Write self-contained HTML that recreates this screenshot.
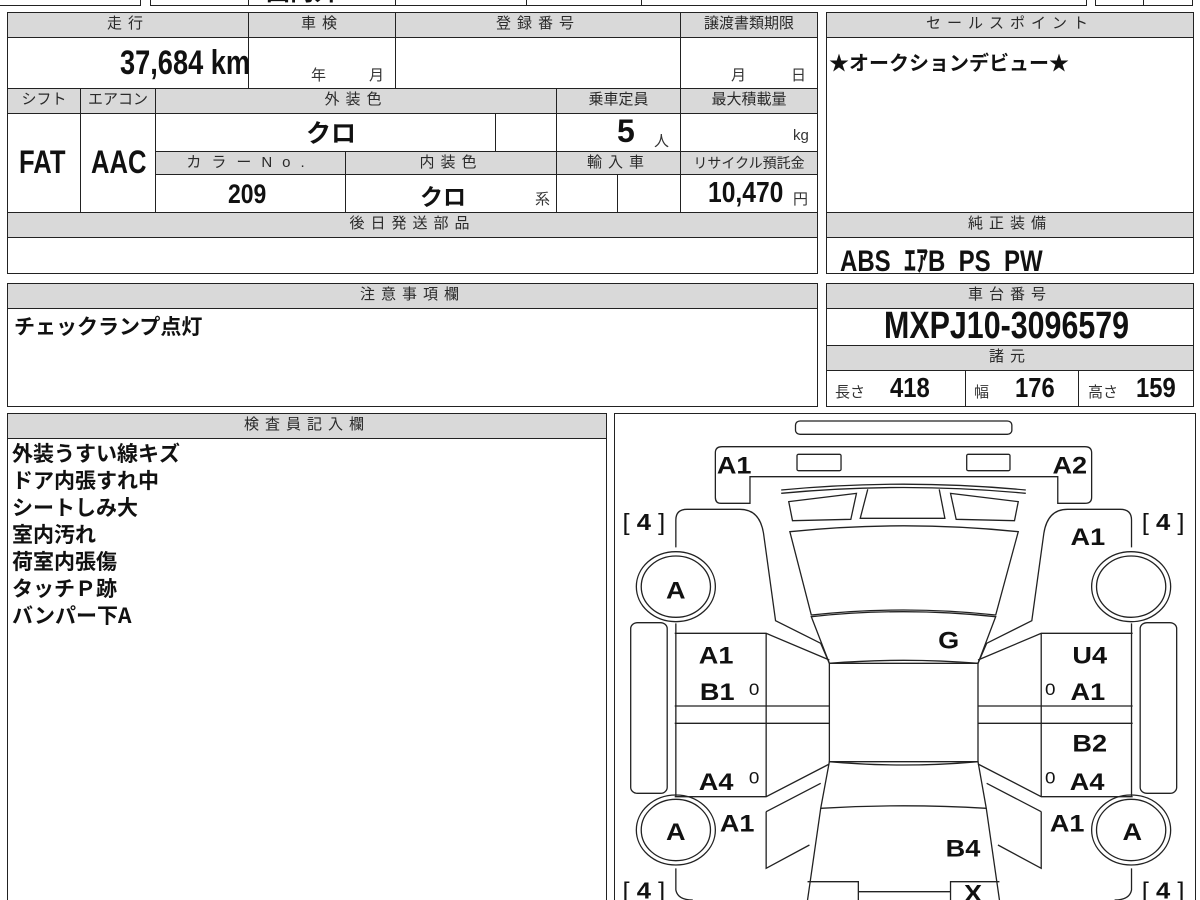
<!DOCTYPE html>
<html style="width:1200px;height:900px;overflow:hidden"><head><meta charset="utf-8">
<style>
*{margin:0;padding:0;box-sizing:border-box}
html,body{width:1200px;height:900px;overflow:hidden}
body{background:#fff;position:relative;font-family:"Liberation Sans","Noto Sans CJK JP",sans-serif;color:#111}
.c{position:absolute;border:1.5px solid #222}
.h{background:#d9d9d9;color:#2a2a2a;font-size:15px;letter-spacing:6px;text-align:center;line-height:22px}
.t{position:absolute;white-space:nowrap}
.n{font-family:"Liberation Sans Narrow","Liberation Sans","Noto Sans CJK JP",sans-serif;font-weight:bold;color:#111}
.j{font-family:"Noto Sans CJK JP",sans-serif;font-weight:bold;color:#111}
.s{font-size:15px;color:#333}
</style></head><body>
<div class="c" style="left:-2px;top:-20px;width:143px;height:26px"></div>
<div class="c" style="left:150px;top:-20px;width:99px;height:26px"></div>
<div class="c" style="left:248px;top:-20px;width:148px;height:26px"></div>
<div class="c" style="left:395px;top:-20px;width:132px;height:26px"></div>
<div class="c" style="left:526px;top:-20px;width:116px;height:26px"></div>
<div class="c" style="left:641px;top:-20px;width:446px;height:26px"></div>
<div class="c" style="left:1095px;top:-20px;width:49px;height:26px"></div>
<div class="c" style="left:1143px;top:-20px;width:50px;height:26px"></div>
<div class="t j" style="left:266px;top:-28px;font-size:24px">国内外</div>

<div class="c h" style="left:7px;top:12px;width:242px;height:26px">走行</div>
<div class="c h" style="left:248px;top:12px;width:148px;height:26px">車検</div>
<div class="c h" style="left:395px;top:12px;width:286px;height:26px">登録番号</div>
<div class="c h" style="left:680px;top:12px;width:138px;height:26px;letter-spacing:0">譲渡書類期限</div>
<div class="c" style="left:7px;top:37px;width:242px;height:52px"></div>
<div class="c" style="left:248px;top:37px;width:148px;height:52px"></div>
<div class="c" style="left:395px;top:37px;width:286px;height:52px"></div>
<div class="c" style="left:680px;top:37px;width:138px;height:52px"></div>
<div class="t n" style="left:120px;top:44px;font-size:34px;transform:scaleX(.8);transform-origin:left">37,684 km</div>
<div class="t s" style="left:311px;top:64px">年</div>
<div class="t s" style="left:369px;top:64px">月</div>
<div class="t s" style="left:731px;top:64px">月</div>
<div class="t s" style="left:791px;top:64px">日</div>

<div class="c h" style="left:7px;top:88px;width:74px;height:26px;letter-spacing:0">シフト</div>
<div class="c h" style="left:80px;top:88px;width:76px;height:26px;letter-spacing:0">エアコン</div>
<div class="c h" style="left:155px;top:88px;width:402px;height:26px">外装色</div>
<div class="c h" style="left:556px;top:88px;width:125px;height:26px;letter-spacing:0">乗車定員</div>
<div class="c h" style="left:680px;top:88px;width:138px;height:26px;letter-spacing:0">最大積載量</div>
<div class="c" style="left:7px;top:113px;width:74px;height:100px"></div>
<div class="c" style="left:80px;top:113px;width:76px;height:100px"></div>
<div class="c" style="left:155px;top:113px;width:341px;height:39px"></div>
<div class="c" style="left:495px;top:113px;width:62px;height:39px"></div>
<div class="c" style="left:556px;top:113px;width:125px;height:39px"></div>
<div class="c" style="left:680px;top:113px;width:138px;height:39px"></div>
<div class="t n" style="left:19px;top:144px;font-size:32px;transform:scaleX(.8);transform-origin:left">FAT</div>
<div class="t n" style="left:91px;top:144px;font-size:32px;transform:scaleX(.8);transform-origin:left">AAC</div>
<div class="t j" style="left:306px;top:114px;font-size:25px">クロ</div>
<div class="t n" style="left:617px;top:113px;font-size:32px">5</div>
<div class="t s" style="left:654px;top:130px">人</div>
<div class="t s" style="left:793px;top:127px">kg</div>

<div class="c h" style="left:155px;top:151px;width:191px;height:24px;letter-spacing:10px">カラーNo.</div>
<div class="c h" style="left:345px;top:151px;width:212px;height:24px">内装色</div>
<div class="c h" style="left:556px;top:151px;width:125px;height:24px">輸入車</div>
<div class="c h" style="left:680px;top:151px;width:138px;height:24px;letter-spacing:0;font-size:14px">リサイクル預託金</div>
<div class="c" style="left:155px;top:174px;width:191px;height:39px"></div>
<div class="c" style="left:345px;top:174px;width:212px;height:39px"></div>
<div class="c" style="left:556px;top:174px;width:62px;height:39px"></div>
<div class="c" style="left:617px;top:174px;width:64px;height:39px"></div>
<div class="c" style="left:680px;top:174px;width:138px;height:39px"></div>
<div class="t n" style="left:228px;top:179px;font-size:27px;transform:scaleX(.85);transform-origin:left">209</div>
<div class="t j" style="left:420px;top:178px;font-size:23px">クロ</div>
<div class="t s" style="left:535px;top:188px">系</div>
<div class="t n" style="left:708px;top:177px;font-size:29px;transform:scaleX(.85);transform-origin:left">10,470</div>
<div class="t s" style="left:793px;top:188px">円</div>
<div class="c h" style="left:7px;top:212px;width:811px;height:26px">後日発送部品</div>
<div class="c" style="left:7px;top:237px;width:811px;height:37px"></div>

<div class="c h" style="left:826px;top:12px;width:368px;height:26px">セールスポイント</div>
<div class="c" style="left:826px;top:37px;width:368px;height:176px"></div>
<div class="t j" style="left:829px;top:47px;font-size:20px">★オークションデビュー★</div>
<div class="c h" style="left:826px;top:212px;width:368px;height:26px">純正装備</div>
<div class="c" style="left:826px;top:237px;width:368px;height:37px"></div>
<div class="t n" style="left:840px;top:236px;font-size:30px;transform:scaleX(.8);transform-origin:left">ABS &nbsp;ｴｱB &nbsp;PS &nbsp;PW</div>

<div class="c h" style="left:7px;top:283px;width:811px;height:26px">注意事項欄</div>
<div class="c" style="left:7px;top:308px;width:811px;height:99px"></div>
<div class="t j" style="left:14px;top:311px;font-size:21px">チェックランプ点灯</div>

<div class="c h" style="left:826px;top:283px;width:368px;height:26px">車台番号</div>
<div class="c" style="left:826px;top:308px;width:368px;height:38px"></div>
<div class="t n" style="left:884px;top:305px;font-size:38px;transform:scaleX(.8);transform-origin:left">MXPJ10-3096579</div>
<div class="c h" style="left:826px;top:345px;width:368px;height:26px">諸元</div>
<div class="c" style="left:826px;top:370px;width:140px;height:37px"></div>
<div class="c" style="left:965px;top:370px;width:114px;height:37px"></div>
<div class="c" style="left:1078px;top:370px;width:116px;height:37px"></div>
<div class="t s" style="left:835px;top:381px">長さ</div>
<div class="t n" style="left:890px;top:372px;font-size:28px;transform:scaleX(.85);transform-origin:left">418</div>
<div class="t s" style="left:974px;top:381px">幅</div>
<div class="t n" style="left:1015px;top:372px;font-size:28px;transform:scaleX(.85);transform-origin:left">176</div>
<div class="t s" style="left:1088px;top:381px">高さ</div>
<div class="t n" style="left:1136px;top:372px;font-size:28px;transform:scaleX(.85);transform-origin:left">159</div>

<div class="c h" style="left:7px;top:413px;width:600px;height:26px">検査員記入欄</div>
<div class="c" style="left:7px;top:438px;width:600px;height:464px"></div>
<div class="t j" style="left:12px;top:440px;font-size:21px;line-height:27px">外装うすい線キズ<br>ドア内張すれ中<br>シートしみ大<br>室内汚れ<br>荷室内張傷<br>タッチＰ跡<br>バンパー下A</div>

<div class="c" style="left:614px;top:413px;width:582px;height:489px"></div>
<svg style="position:absolute;left:610px;top:410px" width="590" height="490" viewBox="0 0 1568 1470" preserveAspectRatio="none">
<g fill="none" stroke="#222" stroke-width="1.3">
<rect x="493" y="33" width="575" height="40" rx="12" vector-effect="non-scaling-stroke"/>
<path vector-effect="non-scaling-stroke" d="M372,280 L295,280 Q280,280 280,262 L280,128 Q280,110 298,110 L1262,110 Q1280,110 1280,128 L1280,262 Q1280,280 1262,280 L1190,280 L1190,200 L372,200 Z"/>
<rect vector-effect="non-scaling-stroke" x="497" y="133" width="117" height="49" rx="4"/>
<rect vector-effect="non-scaling-stroke" x="948" y="133" width="115" height="49" rx="4"/>
<path vector-effect="non-scaling-stroke" d="M455,240 Q780,205 1105,240 M455,250 Q780,215 1105,250"/>
<path vector-effect="non-scaling-stroke" d="M475,275 L655,250 L640,328 L485,332 Z M1085,275 L905,250 L920,328 L1075,332 Z"/>
<path vector-effect="non-scaling-stroke" d="M685,238 L665,325 L890,325 L875,238"/>
<path vector-effect="non-scaling-stroke" d="M478,365 Q780,330 1085,365 L1025,615 Q780,585 535,615 Z"/>
<path vector-effect="non-scaling-stroke" d="M535,620 Q780,590 1025,620 L978,760 Q780,742 583,760 Z"/>
<rect vector-effect="non-scaling-stroke" x="583" y="760" width="395" height="295"/>
<path vector-effect="non-scaling-stroke" d="M583,1055 Q780,1075 978,1055 L1000,1195 Q780,1180 560,1195 Z"/>
<path vector-effect="non-scaling-stroke" d="M560,1195 L525,1470 M1000,1195 L1035,1470 M525,1415 L660,1415 L660,1470 M1035,1415 L905,1415 L905,1470 M660,1445 L905,1445"/>
<path vector-effect="non-scaling-stroke" d="M175,412 L175,330 Q175,298 205,298 L345,298 Q398,298 408,370 L440,632 L560,700 L583,760"/>
<path vector-effect="non-scaling-stroke" d="M172,670 L415,670 L583,750 M415,670 L415,1160 M172,888 L583,888 M172,940 L583,940 M172,1160 L415,1160 L583,1062 M175,640 L175,1160"/>
<path vector-effect="non-scaling-stroke" d="M415,1205 L560,1120 M415,1205 L415,1375 L530,1305 M175,1375 L175,1440 Q180,1470 220,1470"/>
<rect vector-effect="non-scaling-stroke" x="55" y="638" width="97" height="512" rx="18"/>
<path vector-effect="non-scaling-stroke" d="M1386,412 L1386,330 Q1386,298 1356,298 L1216,298 Q1163,298 1153,370 L1121,632 L1001,700 L978,760"/>
<path vector-effect="non-scaling-stroke" d="M1389,670 L1146,670 L978,750 M1146,670 L1146,1160 M1389,888 L978,888 M1389,940 L978,940 M1389,1160 L1146,1160 L978,1062 M1386,640 L1386,1160"/>
<path vector-effect="non-scaling-stroke" d="M1146,1205 L1001,1120 M1146,1205 L1146,1375 L1031,1305 M1386,1375 L1386,1440 Q1381,1470 1341,1470"/>
<rect vector-effect="non-scaling-stroke" x="1409" y="638" width="97" height="512" rx="18"/>
<ellipse vector-effect="non-scaling-stroke" cx="175" cy="530" rx="105" ry="105"/>
<ellipse vector-effect="non-scaling-stroke" cx="175" cy="530" rx="92" ry="92"/>
<ellipse vector-effect="non-scaling-stroke" cx="1385" cy="530" rx="105" ry="105"/>
<ellipse vector-effect="non-scaling-stroke" cx="1385" cy="530" rx="92" ry="92"/>
<ellipse vector-effect="non-scaling-stroke" cx="175" cy="1260" rx="105" ry="105"/>
<ellipse vector-effect="non-scaling-stroke" cx="175" cy="1260" rx="92" ry="92"/>
<ellipse vector-effect="non-scaling-stroke" cx="1385" cy="1260" rx="105" ry="105"/>
<ellipse vector-effect="non-scaling-stroke" cx="1385" cy="1260" rx="92" ry="92"/>
</g>
<g font-family="Liberation Sans, sans-serif" font-weight="bold" font-size="72" fill="#111" text-anchor="middle">
<text x="330" y="190">A1</text><text x="1222" y="190">A2</text>
<text x="1270" y="405">A1</text>
<text x="175" y="565">A</text><text x="175" y="1290">A</text><text x="1388" y="1290">A</text>
<text x="900" y="715">G</text>
<text x="282" y="760">A1</text><text x="285" y="870">B1</text>
<text x="1275" y="760">U4</text><text x="1270" y="870">A1</text>
<text x="1275" y="1025">B2</text>
<text x="282" y="1140">A4</text><text x="1268" y="1140">A4</text>
<text x="338" y="1265">A1</text><text x="1215" y="1265">A1</text>
<text x="938" y="1340">B4</text><text x="965" y="1475">X</text>
</g>
<g font-family="Liberation Sans, sans-serif" font-size="50" fill="#111" text-anchor="middle">
<text x="383" y="855">0</text><text x="1170" y="855">0</text>
<text x="383" y="1120">0</text><text x="1170" y="1120">0</text>
</g>
<g font-family="Liberation Sans, sans-serif" font-size="68" fill="#111" text-anchor="middle">
<text x="90" y="360"><tspan>[</tspan> <tspan font-weight="bold">4</tspan> <tspan>]</tspan></text>
<text x="1470" y="360"><tspan>[</tspan> <tspan font-weight="bold">4</tspan> <tspan>]</tspan></text>
<text x="90" y="1465"><tspan>[</tspan> <tspan font-weight="bold">4</tspan> <tspan>]</tspan></text>
<text x="1470" y="1465"><tspan>[</tspan> <tspan font-weight="bold">4</tspan> <tspan>]</tspan></text>
</g>
</svg>
</body></html>
